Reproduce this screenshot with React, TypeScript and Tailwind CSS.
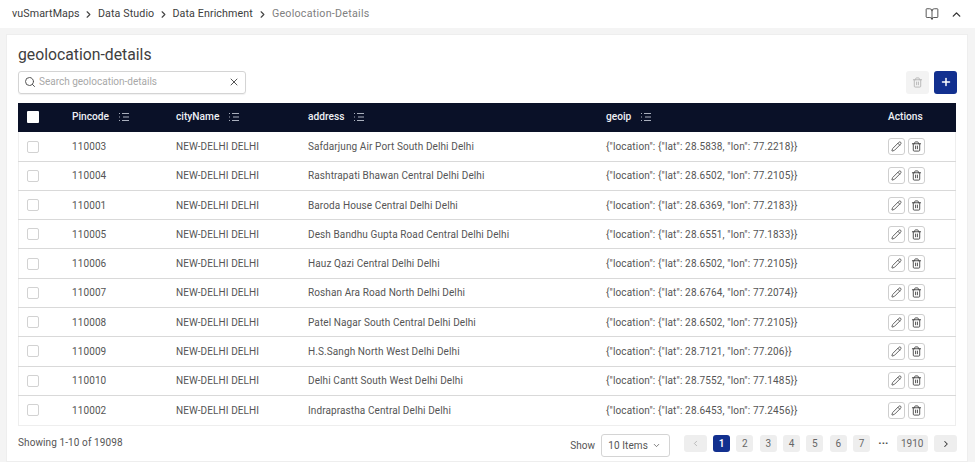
import { Pencil, Trash2, BookOpen, ChevronUp, ChevronRight, ChevronLeft, ChevronDown, Search, X, Plus } from "lucide-react";

const rows = [
  ["110003", "Safdarjung Air Port South Delhi Delhi", '{"location": {"lat": 28.5838, "lon": 77.2218}}'],
  ["110004", "Rashtrapati Bhawan Central Delhi Delhi", '{"location": {"lat": 28.6502, "lon": 77.2105}}'],
  ["110001", "Baroda House Central Delhi Delhi", '{"location": {"lat": 28.6369, "lon": 77.2183}}'],
  ["110005", "Desh Bandhu Gupta Road Central Delhi Delhi", '{"location": {"lat": 28.6551, "lon": 77.1833}}'],
  ["110006", "Hauz Qazi Central Delhi Delhi", '{"location": {"lat": 28.6502, "lon": 77.2105}}'],
  ["110007", "Roshan Ara Road North Delhi Delhi", '{"location": {"lat": 28.6764, "lon": 77.2074}}'],
  ["110008", "Patel Nagar South Central Delhi Delhi", '{"location": {"lat": 28.6502, "lon": 77.2105}}'],
  ["110009", "H.S.Sangh North West Delhi Delhi", '{"location": {"lat": 28.7121, "lon": 77.206}}'],
  ["110010", "Delhi Cantt South West Delhi Delhi", '{"location": {"lat": 28.7552, "lon": 77.1485}}'],
  ["110002", "Indraprastha Central Delhi Delhi", '{"location": {"lat": 28.6453, "lon": 77.2456}}'],
];

function SortIcon() {
  return (
    <svg width="12" height="10" viewBox="0 0 12 10" className="ml-[9px] mt-[1px] text-[#aab0bd]" fill="none" stroke="currentColor" strokeWidth="1">
      <path d="M4 1.5h7M5 5h6M4 8.5h7" />
      <path d="M1 1.5h1M1 5h1M1 8.5h1" />
    </svg>
  );
}

function Head({ w, label }: { w: string; label: string }) {
  return (
    <div className={`${w} flex items-center`}>
      <span>{label}</span>
      <SortIcon />
    </div>
  );
}

function PageBtn({ children, active, w = "w-[17px]" }: { children: React.ReactNode; active?: boolean; w?: string }) {
  return (
    <div className={`${w} h-[17px] rounded-[3px] flex items-center justify-center text-[10px] ${active ? "bg-[#12308f] text-white font-semibold" : "bg-[#eeeeee] text-[#666]"}`}>
      {children}
    </div>
  );
}

export default function App() {
  return (
    <div className="w-[975px] h-[462px] overflow-hidden bg-[#f4f4f4] flex flex-col text-[#4a4a4a]" style={{ fontFamily: "Roboto, 'Liberation Sans', sans-serif" }}>
      <div className="h-[28px] shrink-0 bg-white flex items-center pl-[12px] pr-[12px] text-[10.7px] tracking-[0.1px]">
        <span className="text-[#3d3d3d]">vuSmartMaps</span>
        <ChevronRight size={11} strokeWidth={2.5} className="mx-[3.6px] text-[#444]" />
        <span className="text-[#3d3d3d]">Data Studio</span>
        <ChevronRight size={11} strokeWidth={2.5} className="mx-[3.6px] text-[#444]" />
        <span className="text-[#3d3d3d]">Data Enrichment</span>
        <ChevronRight size={11} strokeWidth={2.5} className="mx-[4px] text-[#444]" />
        <span className="text-[#808080] tracking-[0.25px]">Geolocation-Details</span>
        <div className="ml-auto flex items-center gap-[11px] text-[#333]">
          <BookOpen size={14} strokeWidth={1.4} />
          <ChevronUp size={13} strokeWidth={2.5} />
        </div>
      </div>
      <div className="flex-1 ml-[6px] mr-[7px] mt-[6px] bg-white border border-[#eeeeee] px-[11px] flex flex-col">
        <div className="text-[15.75px] leading-[20px] mt-[10px] text-[#404040]">geolocation-details</div>
        <div className="flex items-center justify-between mt-[5px] h-[24px]">
          <div className="w-[228px] h-[23px] border border-[#d4d4d4] rounded-[3px] flex items-center pl-[5px] pr-[5px] shadow-[0_1px_1px_rgba(0,0,0,0.06)]">
            <Search size={12} className="text-[#555]" />
            <span className="ml-[3px] text-[10px] leading-[14px] -mt-[1px] text-[#a8a8a8]">Search geolocation-details</span>
            <X size={12} className="ml-auto text-[#555]" />
          </div>
          <div className="flex items-center gap-[5px] -mr-[1px]">
            <div className="w-[23px] h-[23px] rounded-[3px] bg-[#f3f3f3] flex items-center justify-center">
              <Trash2 size={11} className="text-[#b5b5b5]" />
            </div>
            <div className="w-[23px] h-[23px] rounded-[3px] bg-[#12308f] flex items-center justify-center">
              <Plus size={12} strokeWidth={3} className="text-white" />
            </div>
          </div>
        </div>
        <div className="mt-[9px] border-b border-x border-[#eeeeee]">
          <div className="h-[29.4px] pb-[2px] bg-[#0a1128] text-[#eef0f5] text-[10.2px] font-medium flex items-center -mx-px">
            <div className="w-[54px] pl-[9px]">
              <div className="w-[12px] h-[12px] bg-white rounded-[1px]" />
            </div>
            <Head w="w-[104px]" label="Pincode" />
            <Head w="w-[132px]" label="cityName" />
            <Head w="w-[298px]" label="address" />
            <Head w="w-[282px]" label="geoip" />
            <span>Actions</span>
          </div>
          {rows.map((r, i) => (
            <div key={r[0]} className={`h-[29.28px] flex items-center text-[10px] tracking-[0.1px] text-[#555] -mx-px ${i < rows.length - 1 ? "border-b border-[#d9d9d9]" : ""}`}>
              <div className="w-[54px] pl-[9px]">
                <div className="w-[12px] h-[12px] border border-[#d2d2d2] rounded-[2px]" />
              </div>
              <div className="w-[104px]">{r[0]}</div>
              <div className="w-[132px]">NEW-DELHI DELHI</div>
              <div className="w-[298px]">{r[1]}</div>
              <div className="w-[282px] tracking-[0.16px]">{r[2]}</div>
              <div className="flex gap-[3px]">
                <div className="w-[17px] h-[17px] border border-[#cfcfcf] rounded-[3px] flex items-center justify-center">
                  <Pencil size={11} className="text-[#555]" />
                </div>
                <div className="w-[17px] h-[17px] border border-[#cfcfcf] rounded-[3px] flex items-center justify-center">
                  <Trash2 size={11} className="text-[#444]" />
                </div>
              </div>
            </div>
          ))}
        </div>
        <div className="flex items-center justify-between mt-[4px] h-[30px] -mr-[1px]">
          <span className="text-[10px] tracking-[0.1px] text-[#555] -mt-[6px]">Showing 1-10 of 19098</span>
          <div className="flex items-center">
            <span className="text-[10px] tracking-[0.1px] text-[#555] mr-[6px]">Show</span>
            <div className="w-[69px] h-[23px] border border-[#d4d4d4] rounded-[3px] flex items-center pl-[6px] pr-[8px] text-[10px] tracking-[0.1px] text-[#555]">
              10 Items
              <ChevronDown size={9} className="ml-auto" />
            </div>
            <div className="flex items-center gap-[6.33px] ml-[13.5px] -mt-[3px]">
              <PageBtn w="w-[23px]"><ChevronLeft size={9} className="text-[#aaa]" /></PageBtn>
              <PageBtn active>1</PageBtn>
              <PageBtn>2</PageBtn>
              <PageBtn>3</PageBtn>
              <PageBtn>4</PageBtn>
              <PageBtn>5</PageBtn>
              <PageBtn>6</PageBtn>
              <PageBtn>7</PageBtn>
              <span className="w-[14px] text-[11px] leading-none text-center font-bold">···</span>
              <PageBtn w="w-[31px]">1910</PageBtn>
              <PageBtn w="w-[23px]"><ChevronRight size={10} strokeWidth={2.5} className="text-[#333]" /></PageBtn>
            </div>
          </div>
        </div>
      </div>
    </div>
  );
}
